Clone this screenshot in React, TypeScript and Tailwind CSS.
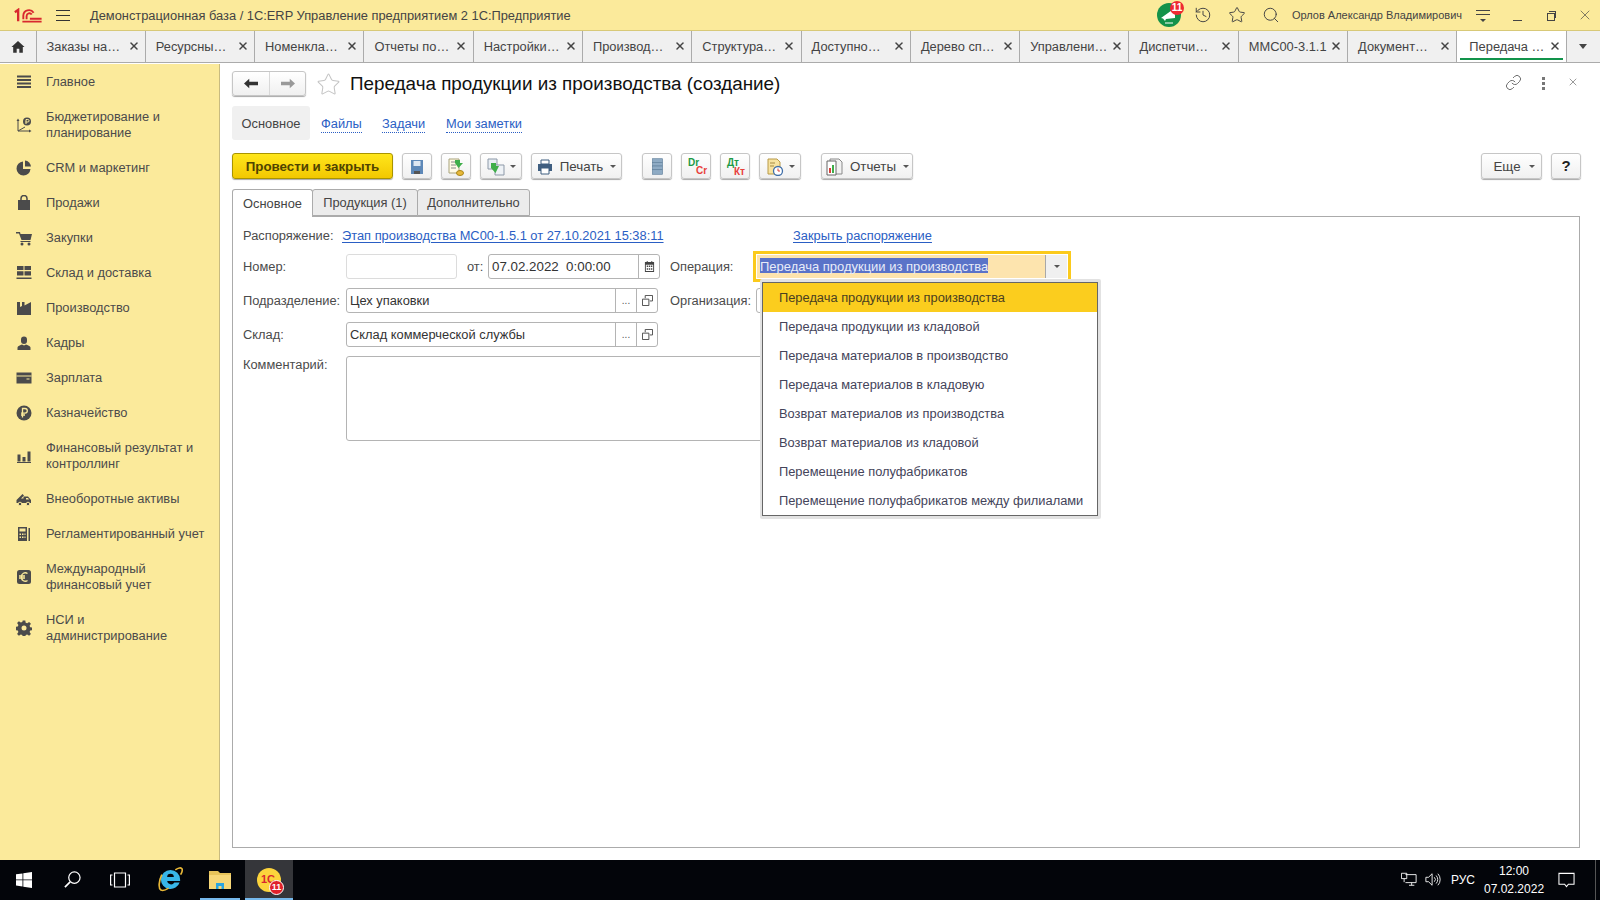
import React from 'react';
import { History, Star, Search, Link as LinkIcon, X } from 'lucide-react';

const tabs = [
  'Заказы на…', 'Ресурсны…', 'Номенкла…', 'Отчеты по…', 'Настройки…', 'Производ…', 'Структура…',
  'Доступно…', 'Дерево сп…', 'Управлени…', 'Диспетчи…', 'ММС00-3.1.1', 'Документ…',
];

const Ic = ({ children }: { children: React.ReactNode }) => (
  <svg viewBox="0 0 16 16" className="w-4 h-4" fill="#4b4b4b">{children}</svg>
);

const menu: { label: string[]; icon: React.ReactNode }[] = [
  { label: ['Главное'], icon: <Ic><path d="M1 1.5h14v2H1zM1 5h14v2H1zM1 8.5h14v2H1zM1 12h14v2H1z" /></Ic> },
  {
    label: ['Бюджетирование и', 'планирование'],
    icon: <Ic><path d="M2 3v11h12" fill="none" stroke="#4b4b4b" strokeWidth="1" /><path d="M2 14 9 10" fill="none" stroke="#4b4b4b" /><path d="M0.5 4 2 1.5 3.5 4zM13 12.5 15.5 14 13 15.5z" /><circle cx="11" cy="4.5" r="4" /><path d="M10 7V2.5h1.800a1.200 1.200 0 0 1 0 2.5H9.5" fill="none" stroke="#fbea9b" /></Ic>,
  },
  { label: ['CRM и маркетинг'], icon: <Ic><path d="M7 1.5a7 7 0 1 0 7.5 7.5H7z" /><path d="M9 0.5a6.5 6.5 0 0 1 6 6H9z" /></Ic> },
  { label: ['Продажи'], icon: <Ic><path d="M2 5h12v10H2z" /><path d="M5 7V3.5a3 3 0 0 1 6 0V7" fill="none" stroke="#4b4b4b" strokeWidth="1.5" /></Ic> },
  { label: ['Закупки'], icon: <Ic><path d="M0 2h4l.5 2H16l-1.5 6H5.5L3 3.5H0z" /><path d="M4.5 11h10v1h-10z" /><circle cx="6" cy="14" r="1.5" /><circle cx="13" cy="14" r="1.5" /></Ic> },
  { label: ['Склад и доставка'], icon: <Ic><path d="M1 1h6.5v4H1zM8.5 1H15v4H8.5zM1 6.2h6.5v4.3H1zM8.5 6.2H15v4.3H8.5zM0.5 12.500h15V14H.5z" /></Ic> },
  { label: ['Производство'], icon: <Ic><path d="M1 15V2h3v5l2-1V2h2.5v3.5L15 2v13z" /></Ic> },
  { label: ['Кадры'], icon: <Ic><path d="M5 4.5a3 3 0 0 1 6 0v1.500a3 3 0 0 1-6 0z" /><path d="M1.5 15v-2.500c0-1.500 3-2.500 4.500-3l2 1 2-1c1.500.5 4.500 1.500 4.500 3V15z" /></Ic> },
  { label: ['Зарплата'], icon: <Ic><path d="M0.5 2.5h15v11h-15z" /><path d="M0.5 5.5h15v1h-15z" fill="#fbea9b" /><path d="M10.5 8.5h3v1h-3z" fill="#fbea9b" /></Ic> },
  { label: ['Казначейство'], icon: <Ic><circle cx="8" cy="8" r="7.5" /><path d="M6.5 12.5v-9h2.5a2.300 2.300 0 0 1 0 4.600H5M5 10h4" fill="none" stroke="#fbea9b" strokeWidth="1.3" /></Ic> },
  { label: ['Финансовый результат и', 'контроллинг'], icon: <Ic><path d="M1.5 6.5h3v7h-3zM6.5 9h3v4.5h-3zM11.5 3.5h3v10h-3zM1 14h14v1H1z" /></Ic> },
  { label: ['Внеоборотные активы'], icon: <Ic><path d="M0.5 12V9l6-6 1.5 1.5-3 3h2.5V5.5H12l3 3.5v3z" /><circle cx="4" cy="13" r="1.8" stroke="#fbea9b" /><circle cx="12" cy="13" r="1.8" stroke="#fbea9b" /><path d="M10 7h2l1 1.5h-3z" fill="#fbea9b" /></Ic> },
  { label: ['Регламентированный учет'], icon: <Ic><path d="M2 1h9v14H2zM12.5 2H14v13h-1.5z" /><path d="M3.5 2.5h6v3h-6zM3.5 7.5h1.5v1.5H3.5zM6 7.5h1.5v1.5H6zM8.5 7.5h1v1.5h-1zM3.5 10.5h1.5v1.5H3.5zM6 10.5h1.5v1.5H6zM8.5 10.5h1v1.5h-1z" fill="#fbea9b" /></Ic> },
  { label: ['Международный', 'финансовый учет'], icon: <Ic><rect x="1" y="1" width="14" height="14" rx="2.5" /><path d="M11.5 4.5a3.800 3.800 0 0 0-6 3.500 3.800 3.800 0 0 0 6 3.500M3 7h6M3 9h6" fill="none" stroke="#fbea9b" strokeWidth="1.3" /></Ic> },
  { label: ['НСИ и', 'администрирование'], icon: <Ic><path d="M6.7 0.5h2.600l.4 2.200 1.500.6 1.900-1.300 1.800 1.800-1.300 1.900.6 1.500 2.200.4v2.600l-2.200.4-.6 1.500 1.300 1.900-1.800 1.800-1.900-1.300-1.500.6-.4 2.200H6.700l-.4-2.200-1.500-.6-1.900 1.300-1.800-1.800 1.300-1.900-.6-1.500-2.200-.4V6.900l2.200-.4.6-1.500L1.100 3.100l1.800-1.800 1.900 1.300 1.500-.6z" /><circle cx="8" cy="8" r="2.5" fill="#fbea9b" /></Ic> },
];

const options = [
  'Передача продукции из производства',
  'Передача продукции из кладовой',
  'Передача материалов в производство',
  'Передача материалов в кладовую',
  'Возврат материалов из производства',
  'Возврат материалов из кладовой',
  'Перемещение полуфабрикатов',
  'Перемещение полуфабрикатов между филиалами',
];

const btn = 'absolute flex items-center justify-center top-[153px] h-[26px] pt-px rounded-[3px] border border-[#c6c6c6] bg-linear-to-b from-white to-[#f0f0f0] shadow-[0_1px_1px_#a8a8a8]';
const arrow = 'w-0 h-0 border-x-[3px] border-x-transparent border-t-[3px] border-t-[#555]';
const label = 'absolute text-[#4b4b4b] leading-4';
const input = 'absolute rounded-[3px] border border-[#b4b4b4] bg-white flex items-center text-[#333]';

const CopyIcon = () => (
  <svg viewBox="0 0 12 12" className="w-[11px] h-[11px]" fill="none" stroke="#444" strokeWidth="1">
    <path d="M3.5 3.5V.5h8v6h-3" />
    <path d="M.5 4.5h7v7h-7z" />
  </svg>
);

const FieldTail = () => (
  <>
    <div className="w-[21px] self-stretch ml-auto border-l border-[#b4b4b4] flex items-end justify-center pb-[6px] text-[10px] leading-none text-[#555]">...</div>
    <div className="w-[21px] self-stretch border-l border-[#b4b4b4] flex items-center justify-center"><CopyIcon /></div>
  </>
);

export default function App() {
  return (
    <div className="w-[1600px] h-[900px] relative overflow-hidden bg-white text-[12.85px] [font-family:Liberation_Sans,Arial,sans-serif]">
      {/* заголовок */}
      <div className="absolute left-0 top-0 w-full h-[31px] bg-[#fbea9b] border-b border-[#d8c978]">
        <svg viewBox="0 0 30 16" className="absolute left-[13px] top-[8px] w-[30px] h-[15px]" fill="none" stroke="#d8282f" strokeWidth="2">
          <path d="M1 4.5 4.5 2V14" strokeWidth="2.5" />
          <path d="M10 12V8a6 6 0 0 1 11 -3" />
          <path d="M13.5 12V8.500a3 3 0 0 1 5.500-1.500" />
          <path d="M9 14.5H29.5M17 11.5H29.5" />
        </svg>
        <div className="absolute left-[56px] top-[10px] w-[14px] h-[11px] border-y border-[#333]"><div className="mt-[4px] h-px bg-[#333]" /></div>
        <div className="absolute left-[90px] top-[8px] leading-4 text-[#444]">Демонстрационная база / 1С:ERP Управление предприятием 2 1С:Предприятие</div>

        <svg viewBox="0 0 24 24" className="absolute left-[1157px] top-[3px] w-6 h-6">
          <circle cx="12" cy="12" r="12" fill="#14924a" />
          <path d="M4 15 18 5v10l-9 1-1 2-2-2.500z" fill="#fff" />
          <path d="M8 20h8" stroke="#fff" strokeWidth="1" />
        </svg>
        <div className="absolute left-[1170px] top-[1px] w-[14px] h-[14px] rounded-full bg-[#ee2a32] text-white text-[10px] font-bold leading-[14px] text-center">11</div>
        <History className="absolute left-[1194px] top-[6px] w-[18px] h-[18px] text-[#444]" strokeWidth={1.3} />
        <Star className="absolute left-[1228px] top-[6px] w-[18px] h-[18px] text-[#444]" strokeWidth={1.3} />
        <Search className="absolute left-[1262px] top-[6px] w-[18px] h-[18px] text-[#444]" strokeWidth={1.3} />
        <div className="absolute left-[1292px] top-[8px] leading-[14px] text-[11px] text-[#444]">Орлов Александр Владимирович</div>
        <div className="absolute left-[1476px] top-[10px] w-[14px] h-[5px] border-y border-[#444]" />
        <div className="absolute left-[1480px] top-[19px] w-0 h-0 border-x-[3px] border-x-transparent border-t-[3px] border-t-[#444]" />
        <div className="absolute left-[1513px] top-[20px] w-[9px] h-px bg-[#444]" />
        <div className="absolute left-[1547px] top-[13px] w-[8px] h-[8px] border border-[#444] bg-[#fbea9b]" />
        <div className="absolute left-[1549px] top-[11px] w-[7px] h-[7px] border-t border-r border-[#444]" />
        <X className="absolute left-[1577px] top-[7px] w-4 h-4 text-[#444]" strokeWidth={1} />
      </div>

      {/* вкладки */}
      <div className="absolute left-0 top-[31px] w-full h-[32px] flex bg-[#f0f0f0] border-b border-[#ababab]">
        <div className="w-[36.5px] shrink-0 border-r border-[#ababab] flex items-center justify-center">
          <svg viewBox="0 0 16 16" className="w-[14px] h-[14px]" fill="#333"><path d="M8 1 15.5 8H13.5V14.5H9.500V10H6.5V14.5H2.5V8H.5z" /></svg>
        </div>
        {tabs.map((t) => (
          <div key={t} className="w-[109.3px] shrink-0 border-r border-[#ababab] relative text-[#444]">
            <span className="absolute left-[10px] top-[8px] leading-4 whitespace-nowrap">{t}</span>
            <X className="absolute left-[91px] top-[9px] w-[12px] h-[12px] text-[#444]" strokeWidth={3} />
          </div>
        ))}
        <div className="w-[109.5px] shrink-0 bg-white border-r border-[#ababab] relative text-[#444]">
          <span className="absolute left-[12px] top-[8px] leading-4 whitespace-nowrap">Передача …</span>
          <X className="absolute left-[92px] top-[9px] w-[12px] h-[12px] text-[#444]" strokeWidth={3} />
          <div className="absolute left-[3px] right-[3px] top-[27px] h-[2px] bg-[#12934b]" />
        </div>
        <div className="flex-1 flex items-center justify-center">
          <div className="w-0 h-0 border-x-[4px] border-x-transparent border-t-[5px] border-t-[#444]" />
        </div>
      </div>

      {/* разделы */}
      <div className="absolute left-0 top-[64px] w-[220px] h-[796px] bg-[#fbea9b] border-r border-[#c8bb80] flex flex-col">
        {menu.map((m) => (
          <div key={m.label[0]} className={`flex items-center shrink-0 ${m.label.length > 1 ? 'h-[51px]' : 'h-[35px]'}`}>
            <div className="w-[46px] shrink-0 flex justify-center pl-[2px]">{m.icon}</div>
            <div className="leading-4 text-[#4b4b4b]">
              {m.label.map((l) => <div key={l}>{l}</div>)}
            </div>
          </div>
        ))}
      </div>

      {/* шапка формы */}
      <div className="absolute left-[232px] top-[71px] w-[74px] h-[25px] rounded-[3px] border border-[#c6c6c6] bg-linear-to-b from-white to-[#f0f0f0] shadow-[0_1px_1px_#a8a8a8] flex">
        <div className="w-[37px] border-r border-[#d8d8d8] flex items-center justify-center">
          <svg viewBox="0 0 16 12" className="w-[14px] h-[11px]" fill="#333"><path d="M0 6 6 .5V4H16V8H6V11.5z" /></svg>
        </div>
        <div className="flex-1 flex items-center justify-center">
          <svg viewBox="0 0 16 12" className="w-[14px] h-[11px]" fill="#999"><path d="M16 6 10 .5V4H0V8H10V11.5z" /></svg>
        </div>
      </div>
      <Star className="absolute left-[316px] top-[72px] w-[25px] h-[25px] text-[#c4c4c4]" strokeWidth={1} />
      <div className="absolute left-[350px] top-[74px] text-[18.85px] leading-5 text-[#111]">Передача продукции из производства (создание)</div>

      <LinkIcon className="absolute left-[1505px] top-[74px] w-[17px] h-[17px] text-[#555]" strokeWidth={1.2} />
      <div className="absolute left-[1542px] top-[77px] flex flex-col gap-[2px]">
        <div className="w-[3px] h-[3px] bg-[#777]" /><div className="w-[3px] h-[3px] bg-[#777]" /><div className="w-[3px] h-[3px] bg-[#777]" />
      </div>
      <X className="absolute left-[1567px] top-[76px] w-3 h-3 text-[#555]" strokeWidth={1.2} />

      <div className="absolute left-[232px] top-[106px] w-[78px] h-[34px] pt-px rounded-[3px] bg-[#f0f0f0] flex items-center justify-center text-[#444]">Основное</div>
      <a className="absolute left-[321px] top-[116px] leading-4 text-[#2a5ec4] border-b border-dotted border-[#2a5ec4]">Файлы</a>
      <a className="absolute left-[382px] top-[116px] leading-4 text-[#2a5ec4] border-b border-dotted border-[#2a5ec4]">Задачи</a>
      <a className="absolute left-[446px] top-[116px] leading-4 text-[#2a5ec4] border-b border-dotted border-[#2a5ec4]">Мои заметки</a>

      {/* командная панель */}
      <div className="absolute left-[232px] top-[153px] w-[161px] h-[26px] pt-px rounded-[3px] border border-[#a99400] bg-linear-to-b from-[#ffe61a] to-[#f2c800] shadow-[0_1px_1px_#a8a8a8] flex items-center justify-center font-bold text-[13.33px] text-[#4f4300]">Провести и закрыть</div>

      <div className={`${btn} left-[402px] w-[30px]`}>
        <svg viewBox="0 0 16 16" className="w-4 h-4">
          <path d="M2 1h12v14H2z" fill="#5d88b8" />
          <path d="M4.5 2h7v5h-7z" fill="#dde7f2" />
          <path d="M5 12h6v3H5z" fill="#555" />
        </svg>
      </div>
      <div className={`${btn} left-[441px] w-[30px]`}>
        <svg viewBox="0 0 18 18" className="w-[18px] h-[18px]">
          <path d="M2 1h10v14H2z" fill="#fffbe6" stroke="#a9a37a" />
          <path d="M4 4h6M4 7h5M4 10h5" stroke="#8a8a8a" />
          <ellipse cx="13" cy="15" rx="3.5" ry="2.5" fill="#e8b93a" stroke="#a88416" />
          <path d="M8 2h5v3h3l-4.5 5L8 5z" fill="#3fae4a" />
        </svg>
      </div>
      <div className={`${btn} left-[480px] w-[42px] gap-[5px]`}>
        <svg viewBox="0 0 18 18" className="w-[18px] h-[18px]">
          <path d="M1 1h9v10H1z" fill="#e9eef4" stroke="#8d99a8" />
          <path d="M8 7h9v10H8z" fill="#eef2f6" stroke="#8d99a8" />
          <path d="M4 5h5v3h3l-3.5 7L4 10z" fill="#3fae4a" />
        </svg>
        <div className={arrow} />
      </div>
      <div className={`${btn} left-[531px] w-[91px] gap-[7px] text-[13.33px] text-[#444]`}>
        <svg viewBox="0 0 16 16" className="w-4 h-4">
          <path d="M4 1h8v4H4z" fill="#fff" stroke="#3f5e80" />
          <path d="M1 5h14v7H1z" fill="#3f5e80" />
          <path d="M4 9h8v6H4z" fill="#fff" stroke="#3f5e80" />
        </svg>
        <span>Печать</span>
        <div className={arrow} />
      </div>
      <div className={`${btn} left-[642px] w-[30px]`}>
        <svg viewBox="0 0 12 18" className="w-[11px] h-[17px]" fill="#8fabc4" stroke="#5f7f9b" strokeWidth="0.7">
          <rect x=".5" y=".5" width="11" height="4" /><rect x=".5" y="4.5" width="11" height="4" /><rect x=".5" y="8.5" width="11" height="4" /><rect x=".5" y="12.5" width="11" height="5" />
        </svg>
      </div>
      <div className={`${btn} left-[681px] w-[30px]`}>
        <span className="absolute left-[6px] top-[3px] text-[10px] leading-[11px] font-bold text-[#1c9a46]">Dr</span>
        <span className="absolute left-[14px] top-[11px] text-[10px] leading-[11px] font-bold text-[#e8403a]">Cr</span>
      </div>
      <div className={`${btn} left-[720px] w-[30px]`}>
        <span className="absolute left-[6px] top-[3px] text-[10px] leading-[11px] font-bold text-[#1c9a46]">Дт</span>
        <span className="absolute left-[13px] top-[12px] text-[10px] leading-[11px] font-bold text-[#e8403a]">Кт</span>
      </div>
      <div className={`${btn} left-[759px] w-[42px] gap-[5px]`}>
        <svg viewBox="0 0 18 18" className="w-[18px] h-[18px]">
          <path d="M2 1h9l3 3v12H2z" fill="#f7e3a0" stroke="#b89a48" />
          <path d="M4 5h5M4 8h4" stroke="#a58a45" />
          <circle cx="12" cy="13" r="4.5" fill="#fff" stroke="#3f6ea8" strokeWidth="1.3" />
          <path d="M12 10.5V13h2" stroke="#d8403a" fill="none" />
        </svg>
        <div className={arrow} />
      </div>
      <div className={`${btn} left-[821px] w-[92px] gap-[7px] text-[13.33px] text-[#444]`}>
        <svg viewBox="0 0 18 18" className="w-[18px] h-[18px]">
          <path d="M5 1h9l3 3v12H5z" fill="#f2f2f2" stroke="#8a8a8a" />
          <path d="M2 3h9v14H2z" fill="#fff" stroke="#666" />
          <path d="M4 10h2v5H4z" fill="#d8403a" /><path d="M7 7h2v8H7z" fill="#3fae4a" />
        </svg>
        <span>Отчеты</span>
        <div className={arrow} />
      </div>
      <div className={`${btn} left-[1481px] w-[61px] gap-[8px] pl-[5px] text-[13.33px] text-[#444]`}>
        <span>Еще</span>
        <div className={arrow} />
      </div>
      <div className={`${btn} left-[1551px] w-[30px] font-bold text-[15px] text-[#222]`}>?</div>

      {/* вкладки формы */}
      <div className="absolute left-[232px] top-[216px] w-[1348px] h-[632px] border border-[#ababab]" />
      <div className="absolute left-[232px] top-[189px] w-[81px] h-[28px] rounded-t-[3px] border border-b-0 border-[#ababab] bg-white flex items-center justify-center text-[#444]">Основное</div>
      <div className="absolute left-[312px] top-[189px] w-[106px] h-[27px] rounded-t-[3px] border border-[#ababab] bg-[#ececec] flex items-center justify-center text-[#444]">Продукция (1)</div>
      <div className="absolute left-[417px] top-[189px] w-[113px] h-[27px] rounded-t-[3px] border border-[#ababab] bg-[#ececec] flex items-center justify-center text-[#444]">Дополнительно</div>

      {/* форма */}
      <div className={`${label} left-[243px] top-[228px]`}>Распоряжение:</div>
      <a className="absolute left-[342px] top-[228px] leading-4 text-[#2a5ec4] underline underline-offset-2">Этап производства МС00-1.5.1 от 27.10.2021 15:38:11</a>
      <a className="absolute left-[793px] top-[228px] leading-4 text-[#2a5ec4] underline underline-offset-2">Закрыть распоряжение</a>

      <div className={`${label} left-[243px] top-[259px]`}>Номер:</div>
      <div className="absolute left-[346px] top-[254px] w-[111px] h-[25px] rounded-[3px] border border-[#dcdcdc] bg-white" />
      <div className={`${label} left-[467px] top-[259px]`}>от:</div>
      <div className={`${input} left-[488px] top-[254px] w-[172px] h-[25px]`}>
        <span className="pl-[3px] whitespace-pre text-[13.33px]">07.02.2022  0:00:00</span>
        <div className="w-[21px] self-stretch ml-auto border-l border-[#b4b4b4] flex items-center justify-center">
          <svg viewBox="0 0 12 12" className="w-[11px] h-[11px]" fill="#444"><path d="M1 1h2V0h1v1h4V0h1v1h2v11H1zM2 4v7h8V4z" /><path d="M3 5h1.5v1.5H3zM5.300 5h1.5v1.5H5.300zM7.600 5h1.5v1.5H7.600zM3 8h1.5v1.5H3zM5.300 8h1.5v1.5H5.300zM7.600 8h1.5v1.5H7.600z" /></svg>
        </div>
      </div>
      <div className={`${label} left-[670px] top-[259px]`}>Операция:</div>

      <div className={`${label} left-[243px] top-[293px]`}>Подразделение:</div>
      <div className={`${input} left-[346px] top-[288px] w-[312px] h-[25px]`}>
        <span className="pl-[3px]">Цех упаковки</span>
        <FieldTail />
      </div>
      <div className={`${label} left-[670px] top-[293px]`}>Организация:</div>
      <div className="absolute left-[756px] top-[288px] w-[20px] h-[25px] rounded-l-[3px] border border-[#b4b4b4] bg-white" />

      <div className={`${label} left-[243px] top-[327px]`}>Склад:</div>
      <div className={`${input} left-[346px] top-[322px] w-[312px] h-[25px]`}>
        <span className="pl-[3px]">Склад коммерческой службы</span>
        <FieldTail />
      </div>

      <div className={`${label} left-[243px] top-[357px]`}>Комментарий:</div>
      <div className="absolute left-[346px] top-[356px] w-[430px] h-[85px] rounded-[3px] border border-[#b4b4b4] bg-white" />

      {/* поле операции */}
      <div className="absolute left-[753px] top-[251px] w-[318px] h-[31px] border-[3px] border-[#fbca1c] p-px bg-white">
        <div className="relative w-full h-full flex">
          <div className="flex-1 bg-[#fde4ae] relative border-r border-[#a8a8a8]">
            <span className="absolute left-[3px] top-[3px] h-[15px] leading-[17px] text-[12.98px] bg-[#5a73c8] text-[#e8ecf8] whitespace-nowrap">Передача продукции из производства</span>
          </div>
          <div className="w-[21px] bg-[#f0f0f0] flex items-center justify-center"><div className={arrow} /></div>
        </div>
      </div>

      {/* список */}
      <div className="absolute left-[760px] top-[279px] w-[341px] h-[240px] bg-[#e2e2e2] rounded-[2px]" />
      <div className="absolute left-[762px] top-[282px] w-[336px] h-[234px] bg-white border border-[#666] flex flex-col">
        {options.map((o, i) => (
          <div key={o} className={`h-[29px] shrink-0 pl-[16px] flex items-center whitespace-nowrap ${i === 0 ? 'bg-[#fbcd1e] text-[#4a4020]' : 'text-[#44445a]'}`}>{o}</div>
        ))}
      </div>

      {/* панель задач */}
      <div className="absolute left-0 top-[860px] w-full h-[40px] bg-[#03050a]">
        <svg viewBox="0 0 16 16" className="absolute left-[16px] top-[12px] w-4 h-4" fill="#fff">
          <path d="M0 2.3 6.5 1.4V7.5H0zM7.3 1.300 16 0V7.5H7.3zM0 8.3H6.5V14.5L0 13.6zM7.3 8.3H16V16L7.3 14.7z" />
        </svg>
        <svg viewBox="0 0 18 18" className="absolute left-[64px] top-[11px] w-[17px] h-[17px]" fill="none" stroke="#fff" strokeWidth="1.3">
          <circle cx="11" cy="7" r="6" /><path d="M6.5 11.5 1 17" strokeWidth="1.8" />
        </svg>
        <svg viewBox="0 0 20 16" className="absolute left-[110px] top-[12px] w-5 h-4" fill="none" stroke="#fff" strokeWidth="1.2">
          <path d="M4.5 1h11v14h-11zM2.5 3H.6v10h1.900M17.500 3h1.900v10h-1.900" />
        </svg>
        <svg viewBox="0 0 26 26" className="absolute left-[158px] top-[7px] w-[25px] h-[25px]">
          <path d="M3 13a10 10 0 0 1 20 0v1.500H9.5a4 4 0 0 0 7.500 1.500h5.500A10 10 0 0 1 3 13zM9.5 10.5h7a3.500 3.500 0 0 0-7 0z" fill="#38b6e8" fillRule="evenodd" />
          <path d="M4 8C1 14 0 22 3 24c2 1 5 0 8-2M18 3c3-2 6-3 7-1 .7 1.500-.3 4-1.500 6" fill="none" stroke="#e8b838" strokeWidth="1.7" />
        </svg>
        <svg viewBox="0 0 24 20" className="absolute left-[208px] top-[10px] w-6 h-5">
          <path d="M1 1h9l2 2h11v3H1z" fill="#e8c45a" />
          <path d="M1 5h22v14H1z" fill="#f8d878" />
          <path d="M8 19v-6h8v6h-2.500v-3h-3v3z" fill="#2ea6e0" />
        </svg>
        <div className="absolute left-[200px] top-[38px] w-[40px] h-[2px] bg-[#76b9ed]" />
        <div className="absolute left-[245px] top-0 w-[48px] h-[40px] bg-[#35363a] border-b-2 border-[#76b9ed]" />
        <div className="absolute left-[257px] top-[8px] w-[24px] h-[24px] rounded-full bg-[#fcd43c]" />
        <div className="absolute left-[261px] top-[13px] text-[11px] font-bold leading-3 text-[#d8282f]">1С</div>
        <div className="absolute left-[269px] top-[20px] w-[15px] h-[15px] rounded-full bg-[#e0202a] border border-white text-white text-[9px] font-bold leading-[13px] text-center">11</div>

        <svg viewBox="0 0 18 16" className="absolute left-[1401px] top-[12px] w-[16px] h-[15px]" fill="none" stroke="#fff" strokeWidth="1">
          <path d="M5 2.5h12v9H5M9 14.5h6M12 11.5v3M.5 1h6v6h-6zM3.5 7v4" />
        </svg>
        <svg viewBox="0 0 18 16" className="absolute left-[1425px] top-[12px] w-[16px] h-[15px]" fill="none" stroke="#fff" strokeWidth="1">
          <path d="M1 5.5h3l4-4v13l-4-4H1zM10.500 5.500a3.500 3.500 0 0 1 0 5M12.500 3.500a6.500 6.500 0 0 1 0 9M14.500 1.500a9.500 9.500 0 0 1 0 13" />
        </svg>
        <div className="absolute left-[1451px] top-[12px] text-[12px] leading-4 text-white">РУС</div>
        <div className="absolute left-[1484px] w-[60px] top-[2px] text-center text-[12px] leading-[18px] text-white">12:00<br />07.02.2022</div>
        <svg viewBox="0 0 18 16" className="absolute left-[1558px] top-[12px] w-[17px] h-[16px]" fill="none" stroke="#fff" strokeWidth="1.1">
          <path d="M1 1h16v11.500h-6L9 15l-2-2.500H1z" />
        </svg>
        <div className="absolute left-[1595px] top-0 w-px h-[40px] bg-[#555]" />
      </div>
    </div>
  );
}
